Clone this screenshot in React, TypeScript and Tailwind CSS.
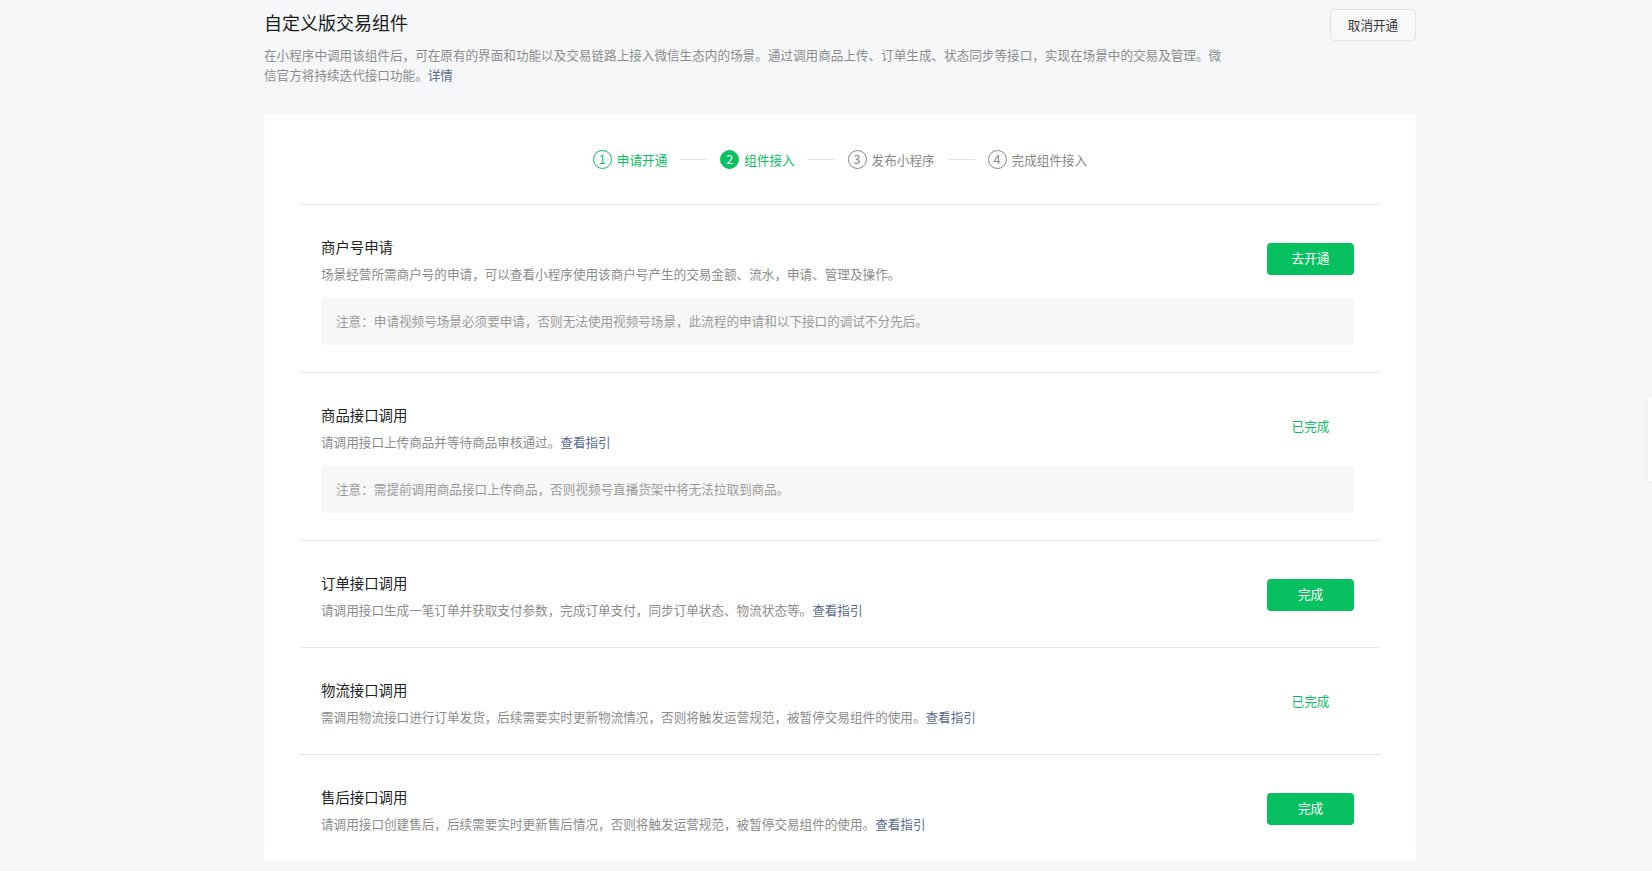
const font = { fontFamily: '"Noto Sans CJK SC", "Noto Sans", sans-serif' }

type Step = { n: number; label: string; state: "done" | "active" | "todo" }

const steps: Step[] = [
  { n: 1, label: "申请开通", state: "done" },
  { n: 2, label: "组件接入", state: "active" },
  { n: 3, label: "发布小程序", state: "todo" },
  { n: 4, label: "完成组件接入", state: "todo" },
]

function StepItem({ step }: { step: Step }) {
  const circle =
    step.state === "active"
      ? "bg-[#07c160] border-[#07c160] text-white"
      : step.state === "done"
        ? "border-[#07c160] text-[#07c160]"
        : "border-[#888] text-[#888]"
  const text = step.state === "todo" ? "text-[#888]" : "text-[#07c160]"
  return (
    <div className="flex items-center">
      <span
        className={`flex h-[19px] w-[19px] items-center justify-center rounded-full border text-[12.6px] leading-none ${circle}`}
      >
        {step.n}
      </span>
      <span className={`ml-[5px] text-[12.6px] leading-[19px] ${text}`}>{step.label}</span>
    </div>
  )
}

function Link({ children }: { children: React.ReactNode }) {
  return <span className="text-[#576b95]">{children}</span>
}

function Section({
  title,
  desc,
  note,
  action,
  last,
}: {
  title: string
  desc: React.ReactNode
  note?: string
  action: "open" | "done" | "finished"
  last?: boolean
}) {
  return (
    <div className={`pl-[21px] pr-[26px] pt-[32px] pb-[27px] ${last ? "" : "border-b border-[#e7e7e7]"}`}>
      <div className="flex items-center">
        <div className="flex-1">
          <div className="text-[14.4px] leading-[20px] text-[#222]">{title}</div>
          <div className="mt-[7px] text-[12.6px] leading-[20px] text-[#8c8c8c]">{desc}</div>
        </div>
        <div className="mb-[4px] flex w-[87px] justify-center">
          {action === "open" && (
            <button className="h-[32px] w-[87px] rounded-[4px] bg-[#07c160] text-[12.6px] text-white">去开通</button>
          )}
          {action === "finished" && (
            <button className="h-[32px] w-[87px] rounded-[4px] bg-[#07c160] text-[12.6px] text-white">完成</button>
          )}
          {action === "done" && <span className="text-[12.6px] text-[#07c160]">已完成</span>}
        </div>
      </div>
      {note && (
        <div className="mt-[14px] flex h-[47px] items-center rounded-[4px] bg-[#f7f7f7] px-[15px] text-[12.6px] text-[#9a9a9a]">
          {note}
        </div>
      )}
    </div>
  )
}

export default function App() {
  return (
    <div className="relative min-h-screen bg-[#f6f7f9]" style={font}>
      <div className="ml-[264px] w-[1152px]">
        <div className="flex items-start justify-between pt-[10px]">
          <div className="w-[962px]">
            <h1 className="text-[18px] leading-[24px] text-[#1a1a1a]">自定义版交易组件</h1>
            <p className="mt-[11px] text-[12.6px] leading-[20px] text-[#8c8c8c]">
              在小程序中调用该组件后，可在原有的界面和功能以及交易链路上接入微信生态内的场景。通过调用商品上传、订单生成、状态同步等接口，实现在场景中的交易及管理。微信官方将持续迭代接口功能。
              <Link>详情</Link>
            </p>
          </div>
          <button className="-mt-px h-[32px] w-[86px] rounded-[4px] border border-[#e3e3e3] bg-[#f8f8f8] text-[12.6px] text-[#353535]">
            取消开通
          </button>
        </div>

        <div className="mt-[29px] bg-white px-[36px]">
          <div className="flex items-center justify-center border-b border-[#e7e7e7] pt-[36px] pb-[35px]">
            {steps.map((s, i) => (
              <div key={s.n} className="flex items-center">
                {i > 0 && <span className="mx-[13px] h-px w-[27px] bg-[#e2e2e2]" />}
                <StepItem step={s} />
              </div>
            ))}
          </div>

          <Section
            title="商户号申请"
            desc="场景经营所需商户号的申请，可以查看小程序使用该商户号产生的交易金额、流水，申请、管理及操作。"
            note="注意：申请视频号场景必须要申请，否则无法使用视频号场景，此流程的申请和以下接口的调试不分先后。"
            action="open"
          />
          <Section
            title="商品接口调用"
            desc={
              <>
                请调用接口上传商品并等待商品审核通过。<Link>查看指引</Link>
              </>
            }
            note="注意：需提前调用商品接口上传商品，否则视频号直播货架中将无法拉取到商品。"
            action="done"
          />
          <Section
            title="订单接口调用"
            desc={
              <>
                请调用接口生成一笔订单并获取支付参数，完成订单支付，同步订单状态、物流状态等。<Link>查看指引</Link>
              </>
            }
            action="finished"
          />
          <Section
            title="物流接口调用"
            desc={
              <>
                需调用物流接口进行订单发货，后续需要实时更新物流情况，否则将触发运营规范，被暂停交易组件的使用。
                <Link>查看指引</Link>
              </>
            }
            action="done"
          />
          <Section
            title="售后接口调用"
            desc={
              <>
                请调用接口创建售后，后续需要实时更新售后情况，否则将触发运营规范，被暂停交易组件的使用。
                <Link>查看指引</Link>
              </>
            }
            action="finished"
            last
          />
        </div>
      </div>
      <div className="absolute right-0 top-[397px] h-[84px] w-[4px] bg-white shadow-[0_0_12px_rgba(0,0,0,0.08)]" />
    </div>
  )
}
